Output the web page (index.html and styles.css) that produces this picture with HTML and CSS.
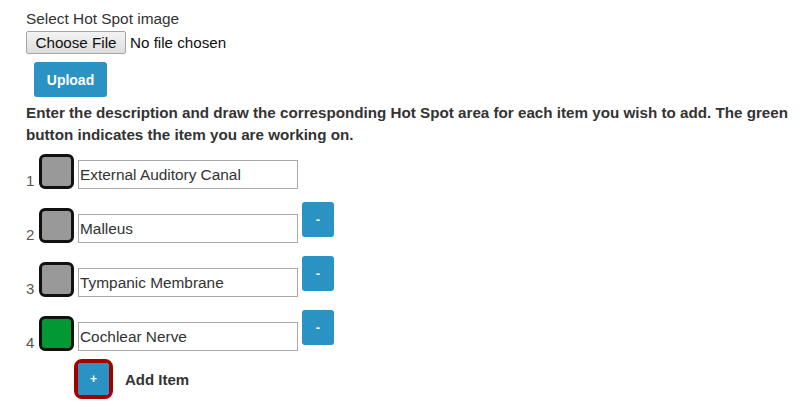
FILE: index.html
```html
<!DOCTYPE html>
<html>
<head>
<meta charset="utf-8">
<link rel="stylesheet" href="styles.css">
</head>
<body>
<div class="page">
  <div class="label">Select Hot Spot image</div>
  <div class="file-row">
    <span class="file-btn">Choose File</span>
    <span class="file-name">No file chosen</span>
  </div>
  <div class="upload-wrap"><button class="btn upload">Upload</button></div>
  <p class="desc">Enter the description and draw the corresponding Hot Spot area for each item you wish to add. The green button indicates the item you are working on.</p>
  <div class="items">
    <div class="item">
      <span class="num">1</span>
      <span class="swatch"></span>
      <span class="field">External Auditory Canal</span>
    </div>
    <div class="item">
      <span class="num">2</span>
      <span class="swatch"></span>
      <span class="field">Malleus</span>
      <button class="btn minus">-</button>
    </div>
    <div class="item">
      <span class="num">3</span>
      <span class="swatch"></span>
      <span class="field">Tympanic Membrane</span>
      <button class="btn minus">-</button>
    </div>
    <div class="item">
      <span class="num">4</span>
      <span class="swatch active"></span>
      <span class="field">Cochlear Nerve</span>
      <button class="btn minus">-</button>
    </div>
  </div>
  <div class="add-row">
    <span class="add-ring"><button class="btn add">+</button></span>
    <span class="add-label">Add Item</span>
  </div>
</div>
</body>
</html>
```
FILE: styles.css
```css
* { box-sizing: border-box; }
html, body { margin: 0; padding: 0; background: #fff; }
body {
  font-family: "Liberation Sans", Arial, sans-serif;
  color: #333;
}
.page { padding: 8px 0 0 26px; }
.label { font-size: 15.4px; line-height: 21px; }
.file-row {
  display: flex;
  align-items: center;
  height: 23px;
  margin-top: 2px;
}
.file-btn {
  display: flex;
  align-items: center;
  justify-content: center;
  width: 100px;
  height: 23px;
  border: 1px solid #a6a6a6;
  border-radius: 2px;
  background: linear-gradient(#f3f3f3, #dddddd);
  color: #111;
  font-size: 15.2px;
}
.file-name { margin-left: 4px; font-size: 15.2px; color: #111; }
.upload-wrap { margin: 8px 0 0 8px; }
.btn {
  border: 0;
  font-family: "Liberation Sans", Arial, sans-serif;
  color: #fff;
  background: #2a93c3;
  border-radius: 3px;
  padding: 0;
  cursor: pointer;
}
.upload {
  display: block;
  width: 73px;
  height: 35px;
  font-weight: bold;
  font-size: 14px;
}
.desc {
  margin: 5px 0 0 0;
  font-weight: bold;
  font-size: 15.2px;
  line-height: 22px;
  width: 770px;
}
.items {
  margin-top: 8px;
  display: flex;
  flex-direction: column;
  gap: 19px;
}
.item {
  display: flex;
  align-items: flex-end;
  height: 35px;
}
.num {
  width: 13px;
  margin-bottom: 1px;
  font-size: 15px;
  line-height: 15px;
  color: #555;
}
.swatch {
  width: 35px;
  height: 35px;
  border: 3px solid #111;
  border-radius: 6px;
  background: #999;
}
.swatch.active { background: #009933; }
.field {
  margin-left: 4px;
  width: 220px;
  height: 29px;
  border: 1px solid #a9a9a9;
  padding: 0 1px;
  font-size: 15.4px;
  line-height: 27px;
  color: #333;
}
.minus {
  align-self: flex-start;
  margin: -6px 0 0 4px;
  width: 32px;
  height: 35px;
  font-size: 13px;
  font-weight: bold;
}
.add-row {
  display: flex;
  align-items: center;
  margin: 8px 0 0 48px;
}
.add-ring {
  display: flex;
  width: 39px;
  height: 40px;
  border: 4px solid #a30000;
  border-radius: 8px;
}
.add {
  flex: 1;
  font-size: 12px;
  font-weight: bold;
}
.add-label {
  margin-left: 12px;
  font-weight: bold;
  font-size: 15px;
}
```
